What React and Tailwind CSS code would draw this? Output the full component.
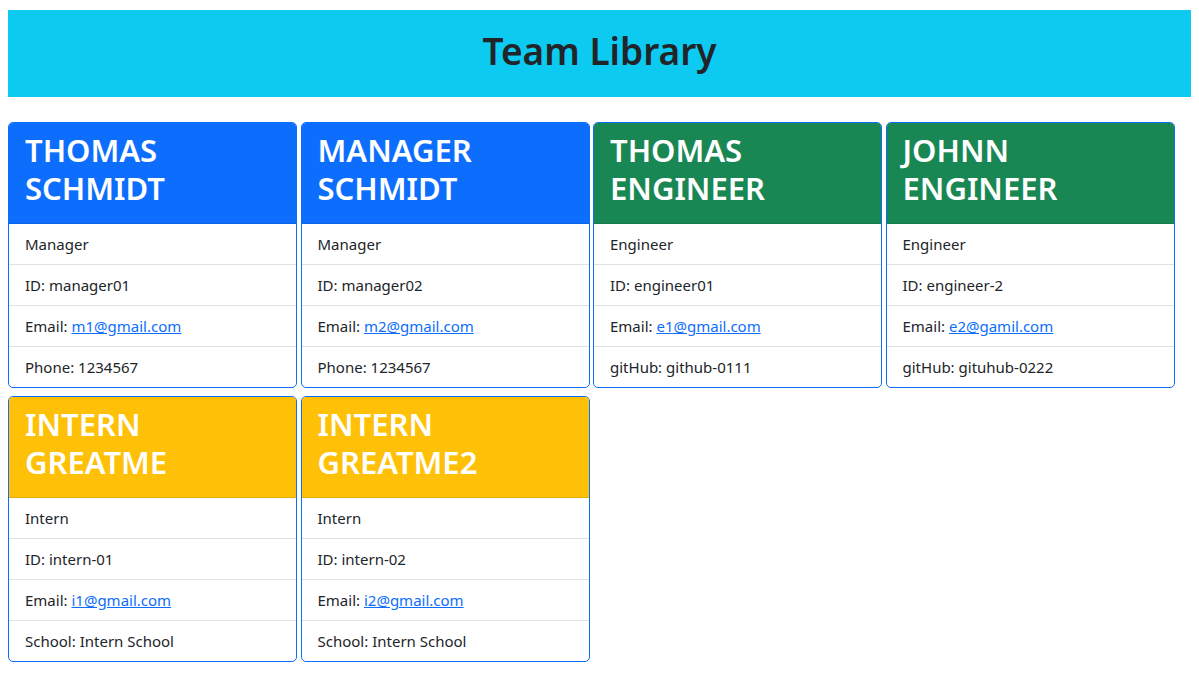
import React from "react";

const cards = [
  { name: ["THOMAS", "SCHMIDT"], role: "Manager", id: "manager01", email: "m1@gmail.com", extra: "Phone: 1234567", bg: "bg-[#0d6efd]" },
  { name: ["MANAGER", "SCHMIDT"], role: "Manager", id: "manager02", email: "m2@gmail.com", extra: "Phone: 1234567", bg: "bg-[#0d6efd]" },
  { name: ["THOMAS", "ENGINEER"], role: "Engineer", id: "engineer01", email: "e1@gmail.com", extra: "gitHub: github-0111", bg: "bg-[#198754]" },
  { name: ["JOHNN", "ENGINEER"], role: "Engineer", id: "engineer-2", email: "e2@gamil.com", extra: "gitHub: gituhub-0222", bg: "bg-[#198754]" },
  { name: ["INTERN", "GREATME"], role: "Intern", id: "intern-01", email: "i1@gmail.com", extra: "School: Intern School", bg: "bg-[#ffc107]" },
  { name: ["INTERN", "GREATME2"], role: "Intern", id: "intern-02", email: "i2@gmail.com", extra: "School: Intern School", bg: "bg-[#ffc107]" },
];

function Card({ c }) {
  return (
    <div className="w-[289px] border border-[#0d6efd] rounded-[5px] overflow-hidden bg-white">
      <div className={`${c.bg} px-4 pt-2 pb-4 border-b border-black/10`}>
        <h2 className="text-[31px] leading-[38px] font-semibold text-white flex flex-col">
          <span>{c.name[0]}</span>
          <span>{c.name[1]}</span>
        </h2>
      </div>
      <ul className="text-[15px] leading-6 text-[#212529]">
        <li className="px-4 py-2 border-b border-[#dee2e6]">{c.role}</li>
        <li className="px-4 py-2 border-b border-[#dee2e6]">ID: {c.id}</li>
        <li className="px-4 py-2 border-b border-[#dee2e6]">
          Email: <a href="#" className="text-[#0d6efd] underline">{c.email}</a>
        </li>
        <li className="px-4 py-2">{c.extra}</li>
      </ul>
    </div>
  );
}

export default function App() {
  return (
    <div className="min-h-[685px] bg-white px-2 pt-[10px]" style={{ fontFamily: '"Noto Sans", "Open Sans", sans-serif' }}>
      <header className="bg-[#0dcaf0] h-[87px] flex items-center justify-center pb-[5px]">
        <h1 className="text-[37px] font-semibold text-[#212529] leading-[48px]">Team Library</h1>
      </header>
      <div className="mt-[25px] flex flex-wrap gap-x-[3.5px] gap-y-[8px] w-[1170px]">
        {cards.map((c, i) => (
          <Card key={i} c={c} />
        ))}
      </div>
    </div>
  );
}
